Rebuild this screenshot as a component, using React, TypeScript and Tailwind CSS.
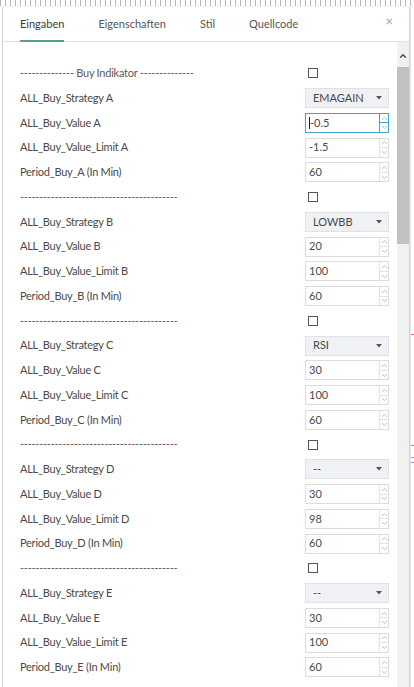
import { ChevronUp } from 'lucide-react';

type Row =
  | { kind: 'head'; text: string }
  | { kind: 'select'; label: string; value: string }
  | { kind: 'num'; label: string; value: string; focus?: boolean };

const groups = [
  { id: 'A', head: '-------------- Buy Indikator --------------', strategy: 'EMAGAIN', value: '-0.5', limit: '-1.5', period: '60', focus: true },
  { id: 'B', head: '-----------------------------------------', strategy: 'LOWBB', value: '20', limit: '100', period: '60' },
  { id: 'C', head: '-----------------------------------------', strategy: 'RSI', value: '30', limit: '100', period: '60' },
  { id: 'D', head: '-----------------------------------------', strategy: '--', value: '30', limit: '98', period: '60' },
  { id: 'E', head: '-----------------------------------------', strategy: '--', value: '30', limit: '100', period: '60' },
];

const rows: Row[] = groups.flatMap((g) => [
  { kind: 'head', text: g.head } as Row,
  { kind: 'select', label: `ALL_Buy_Strategy ${g.id}`, value: g.strategy } as Row,
  { kind: 'num', label: `ALL_Buy_Value ${g.id}`, value: g.value, focus: g.focus } as Row,
  { kind: 'num', label: `ALL_Buy_Value_Limit ${g.id}`, value: g.limit } as Row,
  { kind: 'num', label: `Period_Buy_${g.id} (In Min)`, value: g.period } as Row,
]);

const tabs = ['Eingaben', 'Eigenschaften', 'Stil', 'Quellcode'];

function Spinner({ focus }: { focus?: boolean }) {
  return (
    <div className={`flex flex-col w-[9px] border-l ${focus ? 'border-[#3fa1d6]' : 'border-[#e3e3e3]'}`}>
      <div className="flex-1 flex items-center justify-center">
        <svg width="7" height="5" viewBox="0 0 7 5"><path d="M1 4 L3.5 1.5 L6 4" fill="none" stroke="#b5b5b5" strokeWidth="0.8" /></svg>
      </div>
      <div className={`flex-1 flex items-center justify-center border-t ${focus ? 'border-[#3fa1d6]' : 'border-[#e3e3e3]'}`}>
        <svg width="7" height="5" viewBox="0 0 7 5"><path d="M1 1 L3.5 3.5 L6 1" fill="none" stroke="#b5b5b5" strokeWidth="0.8" /></svg>
      </div>
    </div>
  );
}

export default function App() {
  return (
    <div className="w-[414px] h-[687px] overflow-hidden bg-white relative text-[#4a4a4a]" style={{ fontFamily: 'Lato, "Liberation Sans", sans-serif' }}>
      {/* chart peeking behind the dialog */}
      <div className="h-[7px] border-b border-[#e8e8e8] bg-[repeating-linear-gradient(90deg,#8a8a8a_0px,#8a8a8a_1px,transparent_1px,transparent_5px)] opacity-60" />
      <div className="flex">
        <div className="w-[2px]" />
        <div className="w-[408px] h-[680px] border-l border-r border-[#d4d4d4] bg-white flex flex-col">
          {/* header */}
          <div className="h-[35px] border-b border-[#e0e3eb] flex items-stretch relative">
            <div className="flex items-stretch pl-[17px] gap-[34px]">
              {tabs.map((t, i) => (
                <div key={t} className={`flex items-center text-[11px] relative ${i === 0 ? 'text-[#3a3a3a]' : 'text-[#555]'}`}>
                  {t}
                  {i === 0 && <div className="absolute left-0 right-0 bottom-[-1px] h-[2px] bg-[#53a37f]" />}
                </div>
              ))}
            </div>
            <div className="ml-auto pr-[16px] flex items-center text-[#a0a0a0] text-[13px] pb-[4px]">×</div>
          </div>
          {/* body */}
          <div className="flex flex-1 min-h-0">
            <div className="flex-1 pt-[19px] pl-[17px] pr-[8px]">
              {rows.map((r, i) => (
                <div key={i} className="h-[24.75px] flex items-center text-[11px] tracking-[-0.25px]">
                  {r.kind === 'head' ? (
                    <>
                      <div className="flex-1 text-[#5a5a5a]">{r.text}</div>
                      <div className="w-[84px] pl-[3px]">
                        <div className="w-[10px] h-[10px] border border-[#555] bg-white" />
                      </div>
                    </>
                  ) : (
                    <>
                      <div className="flex-1">{r.label}</div>
                      {r.kind === 'select' ? (
                        <div className="w-[84px] h-[20px] bg-[#eff1f4] border border-[#dfe1e6] flex items-center pl-[7px] pr-[6px]">
                          <span className="flex-1 tracking-normal">{r.value}</span>
                          <svg width="6" height="4" viewBox="0 0 6 4"><path d="M0 0 H6 L3 3.5 Z" fill="#555" /></svg>
                        </div>
                      ) : (
                        <div className={`w-[84px] h-[20px] bg-white border flex ${r.focus ? 'border-[#3fa1d6]' : 'border-[#dcdcdc]'}`}>
                          <div className="flex-1 flex items-center pl-[3px] tracking-normal">
                            {r.focus && <div className="w-[1px] h-[12px] bg-[#222]" />}
                            <span>{r.value}</span>
                          </div>
                          <Spinner focus={r.focus} />
                        </div>
                      )}
                    </>
                  )}
                </div>
              ))}
            </div>
            {/* scrollbar */}
            <div className="w-[12px] flex flex-col bg-[#f1f1f1]">
              <div className="h-[25px] flex items-end justify-center pb-[6px]">
                <ChevronUp size={10} strokeWidth={3.5} color="#505050" />
              </div>
              <div className="h-[177px] bg-[#c1c1c1]" />
            </div>
          </div>
        </div>
        {/* chart strip on the right */}
        <div className="w-[4px] h-[680px] bg-white border-l border-[#e6e6e6] relative">
          <div className="absolute left-0 top-[327px] w-full h-[1px] bg-[#e57373]" />
          <div className="absolute left-0 top-[438px] w-full h-[1px] bg-[#e57373]" />
          <div className="absolute left-0 top-[450px] w-full h-[1px] bg-[#7bbf7b]" />
          <div className="absolute left-0 top-[455px] w-full h-[1px] bg-[#8f8fe0]" />
        </div>
      </div>
    </div>
  );
}
